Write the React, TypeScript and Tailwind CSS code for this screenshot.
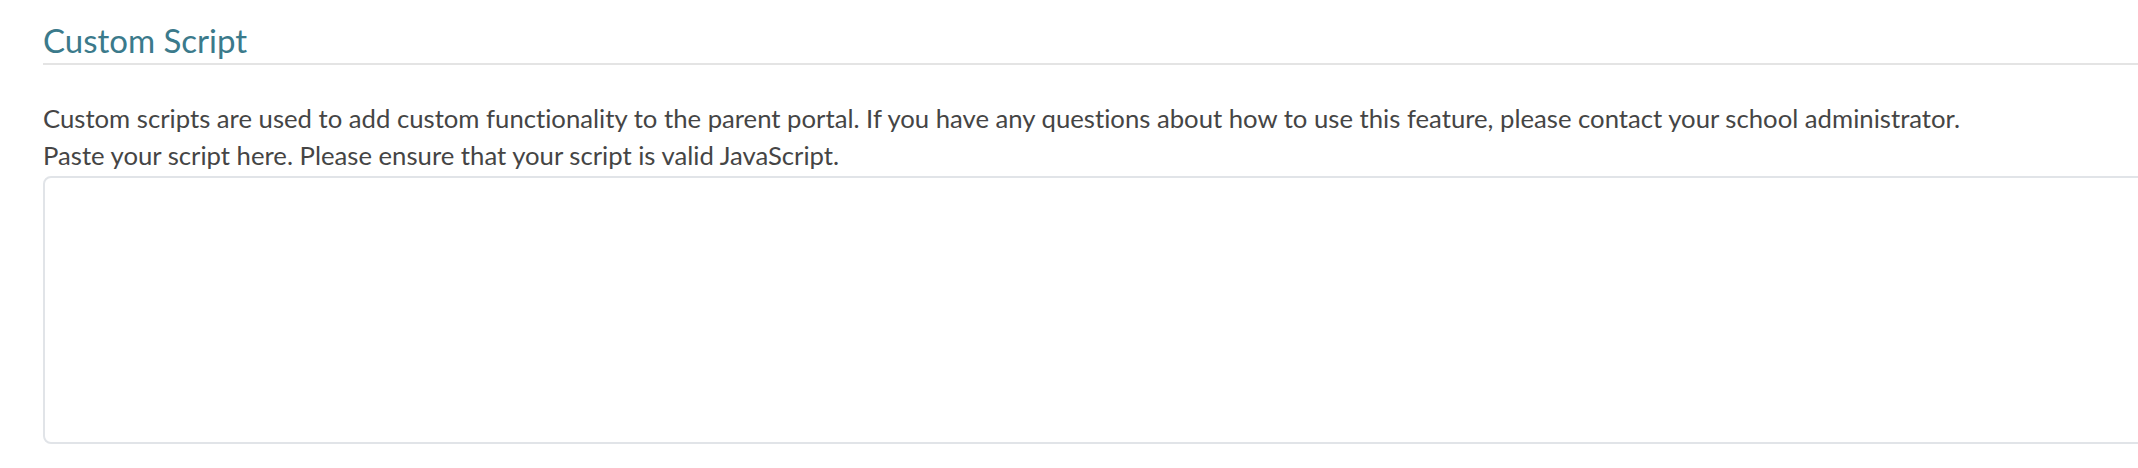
import React from 'react';

const App: React.FC = () => {
  return (
    <div
      className="w-full h-[468px] overflow-hidden bg-white [font-variant-ligatures:none]"
      style={{ fontFamily: 'Lato, "Noto Sans", sans-serif' }}
    >
      <div className="w-[2160px] pl-[43px] pt-[20px]">
        <h2 className="text-[33px] leading-[40px] text-[#3b7a8b] font-normal pb-[3px] border-b-2 border-[#e4e4e4]">
          Custom Script
        </h2>
        <div className="pt-[35px] text-[25.7px] leading-[37px] text-[#454545]">
          <p>
            Custom scripts are used to add custom functionality to the parent portal. If you have any questions about how to use this feature, please contact your school administrator.
          </p>
          <p>Paste your script here. Please ensure that your script is valid JavaScript.</p>
        </div>
        <textarea className="mt-[2px] block w-full h-[268px] rounded-[8px] border-2 border-[#e1e4e8] resize-none outline-none" />
      </div>
    </div>
  );
};

export default App;
